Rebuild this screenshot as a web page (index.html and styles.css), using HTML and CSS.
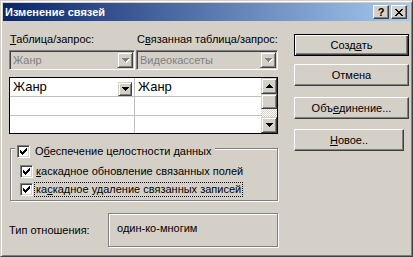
FILE: index.html
```html
<!DOCTYPE html>
<html lang="ru">
<head>
<meta charset="utf-8">
<title>Изменение связей</title>
<link rel="stylesheet" href="styles.css">
</head>
<body>
<div class="window">
  <div class="titlebar">
    <span class="title">Изменение связей</span>
    <div class="tbtns">
      <span class="tbtn help">?</span>
      <span class="tbtn close"><svg width="8" height="7" viewBox="0 0 8 7"><path d="M0 0h2v1H0zM6 0h2v1H6zM1 1h2v1H1zM5 1h2v1H5zM2 2h4v1H2zM3 3h2v1H3zM2 4h4v1H2zM1 5h2v1H1zM5 5h2v1H5zM0 6h2v1H0zM6 6h2v1H6z" fill="#000"/></svg></span>
    </div>
  </div>
  <div class="content">
    <div class="left">
      <div class="labels">
        <span class="lab lab1"><u>Т</u>аблица/запрос:</span>
        <span class="lab lab2">С<u>в</u>язанная таблица/запрос:</span>
      </div>
      <div class="combos">
        <div class="combo c1">
          <span class="ctext">Жанр</span>
          <span class="dd"><svg width="8" height="5" viewBox="0 0 8 5"><path d="M1 1h7v1H1zM2 2h5v1H2zM3 3h3v1H3zM4 4h1v1H4z" fill="#fff"/><path d="M0 0h7v1H0zM1 1h5v1H1zM2 2h3v1H2zM3 3h1v1H3z" fill="#808080"/></svg></span>
        </div>
        <div class="combo c2">
          <span class="ctext">Видеокассеты</span>
          <span class="dd"><svg width="8" height="5" viewBox="0 0 8 5"><path d="M1 1h7v1H1zM2 2h5v1H2zM3 3h3v1H3zM4 4h1v1H4z" fill="#fff"/><path d="M0 0h7v1H0zM1 1h5v1H1zM2 2h3v1H2zM3 3h1v1H3z" fill="#808080"/></svg></span>
        </div>
      </div>
      <div class="grid">
        <div class="table">
          <div class="cell c-left r1"><span class="celltext">Жанр</span><span class="celldd"><svg width="7" height="4" viewBox="0 0 7 4"><path d="M0 0h7v1H0zM1 1h5v1H1zM2 2h3v1H2zM3 3h1v1H3z" fill="#000"/></svg></span></div>
          <div class="cell c-right r1"><span class="celltext">Жанр</span></div>
          <div class="cell c-left r2"></div>
          <div class="cell c-right r2"></div>
          <div class="cell c-left r3"></div>
          <div class="cell c-right r3"></div>
        </div>
        <div class="vscroll">
          <div class="sbtn"><svg width="7" height="4" viewBox="0 0 7 4"><path d="M3 0h1v1H3zM2 1h3v1H2zM1 2h5v1H1zM0 3h7v1H0z" fill="#000"/></svg></div>
          <div class="thumb"></div>
          <div class="track"></div>
          <div class="sbtn"><svg width="7" height="4" viewBox="0 0 7 4"><path d="M0 0h7v1H0zM1 1h5v1H1zM2 2h3v1H2zM3 3h1v1H3z" fill="#000"/></svg></div>
        </div>
      </div>
      <div class="group">
        <div class="legend">
          <span class="chk"><svg width="11" height="11" viewBox="0 0 11 11"><path d="M8 2h1v1H8zM7 3h2v1H7zM2 4h1v1H2zM6 4h3v1H6zM2 5h2v1H2zM5 5h3v1H5zM2 6h5v1H2zM3 7h3v1H3zM4 8h1v1H4z" fill="#000"/></svg></span>
          <span class="legtext">О<u>б</u>еспечение целостности данных</span>
        </div>
        <div class="row">
          <span class="chk"><svg width="11" height="11" viewBox="0 0 11 11"><path d="M8 2h1v1H8zM7 3h2v1H7zM2 4h1v1H2zM6 4h3v1H6zM2 5h2v1H2zM5 5h3v1H5zM2 6h5v1H2zM3 7h3v1H3zM4 8h1v1H4z" fill="#000"/></svg></span>
          <span class="rowtext"><u>к</u>аскадное обновление связанных полей</span>
        </div>
        <div class="row">
          <span class="chk"><svg width="11" height="11" viewBox="0 0 11 11"><path d="M8 2h1v1H8zM7 3h2v1H7zM2 4h1v1H2zM6 4h3v1H6zM2 5h2v1H2zM5 5h3v1H5zM2 6h5v1H2zM3 7h3v1H3zM4 8h1v1H4z" fill="#000"/></svg></span>
          <span class="rowtext focus">ка<u>с</u>кадное удаление связанных записей</span>
        </div>
      </div>
      <div class="relation">
        <span class="rellabel">Тип отношения:</span>
        <div class="relbox">один-ко-многим</div>
      </div>
    </div>
    <div class="right">
      <div class="btn default b-create">Созд<u>а</u>ть</div>
      <div class="btn b-cancel">Отмена</div>
      <div class="btn b-join">Объ<u>е</u>динение...</div>
      <div class="btn b-new"><u>Н</u>овое..</div>
    </div>
  </div>
</div>
</body>
</html>
```

FILE: styles.css
```css
* { box-sizing: border-box; }
html, body { margin: 0; padding: 0; }
body {
  font-family: "Liberation Sans", Arial, sans-serif;
  font-size: 11px;
  color: #000;
  background: #d4d0c8;
}
u { text-decoration: underline; text-underline-offset: 1px; }

.window {
  width: 413px;
  height: 257px;
  background: #d4d0c8;
  border: 1px solid;
  border-color: #d4d0c8 #404040 #404040 #d4d0c8;
  box-shadow: inset 1px 1px #fff, inset -1px -1px #808080;
  padding: 2px;
  display: flex;
  flex-direction: column;
}

.titlebar {
  height: 18px;
  flex: none;
  background: linear-gradient(to right, #0a246a, #a6caf0);
  display: flex;
  align-items: center;
  padding-left: 2px;
}
.title {
  flex: 1;
  color: #fff;
  font-weight: bold;
  font-size: 11px;
  line-height: 13px;
  white-space: nowrap;
}
.tbtns { display: flex; gap: 2px; margin-right: 3px; }
.tbtn {
  width: 16px;
  height: 14px;
  background: #d4d0c8;
  border: 1px solid;
  border-color: #fff #404040 #404040 #fff;
  box-shadow: inset -1px -1px #808080;
  display: flex;
  align-items: center;
  justify-content: center;
  font-weight: bold;
  font-size: 11px;
  line-height: 11px;
}
.tbtn svg { display: block; }

.content {
  display: flex;
  padding: 12px 0 0 6px;
}
.left { width: 270px; display: flex; flex-direction: column; }
.right {
  margin-left: 15px;
  display: flex;
  flex-direction: column;
}

.labels { display: flex; height: 13px; line-height: 13px; white-space: nowrap; }
.lab1 { width: 128px; padding-left: 1px; }

.combos { display: flex; gap: 1px; margin-top: 4px; height: 20px; }
.combo {
  height: 20px;
  background: #d4d0c8;
  border: 1px solid;
  border-color: #808080 #fff #fff #808080;
  box-shadow: inset 1px 1px #404040, inset -1px -1px #d4d0c8;
  padding: 1px;
  display: flex;
  align-items: center;
  color: #808080;
}
.c1 { width: 126px; }
.c2 { width: 142px; }
.ctext { flex: 1; padding-left: 2px; line-height: 13px; white-space: nowrap; }
.dd {
  width: 16px;
  height: 16px;
  background: #d4d0c8;
  border: 1px solid;
  border-color: #d4d0c8 #404040 #404040 #d4d0c8;
  box-shadow: inset 1px 1px #fff, inset -1px -1px #808080;
  display: flex;
  align-items: center;
  justify-content: center;
}
.dd svg { display: block; margin-left: 1px; }

.grid {
  margin-top: 7px;
  width: 269px;
  height: 57px;
  border: 1px solid #000;
  display: flex;
  background: #fff;
}
.table {
  display: grid;
  grid-template-columns: 125px 126px;
  grid-template-rows: 19px 19px 17px;
  width: 251px;
}
.cell {
  border-bottom: 1px solid #c0c0c0;
  display: flex;
  align-items: flex-end;
  justify-content: space-between;
  font-size: 13px;
}
.cell.r3 { border-bottom: none; }
.c-left { border-right: 1px solid #c0c0c0; }
.celltext { align-self: flex-start; padding-left: 3px; line-height: 18px; }
.celldd {
  width: 14px;
  height: 14px;
  margin-right: 2px;
  background: #d4d0c8;
  border: 1px solid;
  border-color: #d4d0c8 #404040 #404040 #d4d0c8;
  box-shadow: inset 1px 1px #fff, inset -1px -1px #808080;
  display: flex;
  align-items: center;
  justify-content: center;
}
.celldd svg, .sbtn svg { display: block; }

.vscroll { width: 16px; display: flex; flex-direction: column; }
.sbtn, .thumb {
  width: 16px;
  background: #d4d0c8;
  border: 1px solid;
  border-color: #d4d0c8 #404040 #404040 #d4d0c8;
  box-shadow: inset 1px 1px #fff, inset -1px -1px #808080;
}
.sbtn { height: 16px; display: flex; align-items: center; justify-content: center; }
.thumb { height: 15px; }
.track {
  flex: 1;
  background: repeating-conic-gradient(#fff 0 25%, #d4d0c8 0 50%) 0 0 / 2px 2px;
}

.group {
  position: relative;
  margin-top: 14px;
  margin-left: 1px;
  width: 268px;
  height: 53px;
  border: 1px solid #808080;
  box-shadow: inset 1px 1px #fff, 1px 1px #fff;
  padding: 16px 0 0 9px;
}
.legend {
  position: absolute;
  top: -4px;
  left: 4px;
  background: #d4d0c8;
  padding: 0 4px 0 2px;
  display: flex;
  align-items: flex-start;
  gap: 5px;
  line-height: 13px;
  white-space: nowrap;
}
.chk {
  flex: none;
  width: 13px;
  height: 13px;
  background: #fff;
  border: 1px solid;
  border-color: #808080 #fff #fff #808080;
  box-shadow: inset 1px 1px #404040, inset -1px -1px #d4d0c8;
}
.chk svg { display: block; }
.row {
  display: flex;
  align-items: flex-start;
  height: 18px;
}
.rowtext {
  margin-left: 1px;
  margin-top: -1px;
  padding: 0 1px;
  border: 1px dotted transparent;
  line-height: 13px;
  white-space: nowrap;
}
.rowtext.focus { border-color: #000; }

.relation {
  display: flex;
  align-items: center;
  margin-top: 12px;
}
.rellabel { width: 99px; line-height: 13px; white-space: nowrap; }
.relbox {
  width: 170px;
  height: 34px;
  border: 1px solid #808080;
  box-shadow: inset 1px 1px #fff, 1px 1px #fff;
  padding: 8px 0 0 8px;
  line-height: 13px;
}

.btn {
  width: 115px;
  height: 22px;
  background: #d4d0c8;
  border: 1px solid;
  border-color: #fff #404040 #404040 #fff;
  box-shadow: inset -1px -1px #808080;
  display: flex;
  align-items: center;
  justify-content: center;
  line-height: 13px;
  white-space: nowrap;
}
.btn.default {
  border-color: #000;
  box-shadow: inset 1px 1px #fff, inset -1px -1px #404040, inset -2px -2px #808080;
}
.b-create { margin-top: 1px; }
.b-cancel { margin-top: 8px; }
.b-join { margin-top: 11px; }
.b-new { margin-top: 10px; width: 110px; }
```
